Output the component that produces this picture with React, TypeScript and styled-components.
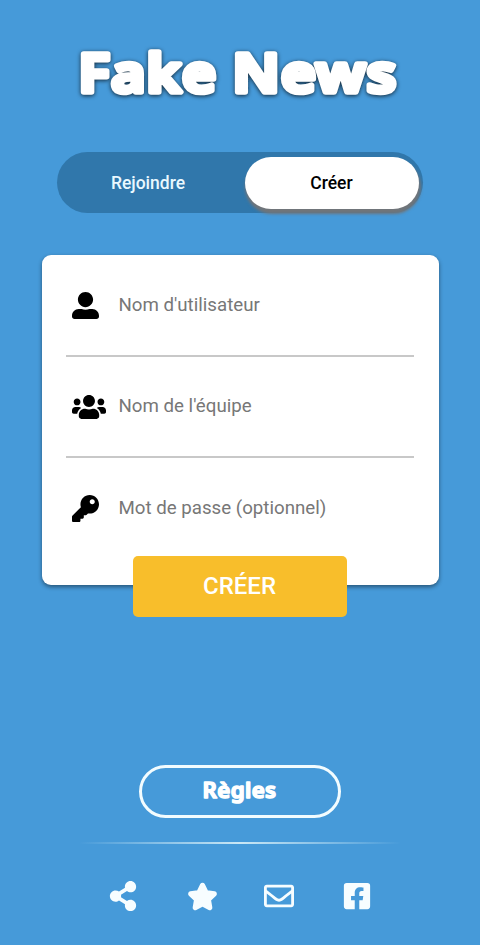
import React from "react";
import styled, { createGlobalStyle } from "styled-components";
import {
  FaUserAlt,
  FaUsers,
  FaKey,
  FaShareAlt,
  FaStar,
  FaRegEnvelope,
  FaFacebookSquare,
} from "react-icons/fa";

const GlobalStyle = createGlobalStyle`
  * { box-sizing: border-box; }
  body {
    margin: 0;
    background: #469ad9;
    font-family: Roboto, "Liberation Sans", sans-serif;
  }
  button, input { font-family: inherit; }
`;

const Page = styled.main`
  display: flex;
  flex-direction: column;
  align-items: center;
  width: 480px;
  height: 945px;
  overflow: hidden;
`;

const Logo = styled.svg`
  display: block;
  flex: none;
  width: 360px;
  height: 90px;
  margin-top: 30px;
  filter: drop-shadow(0 1px 2px rgba(0, 0, 0, 0.75));
`;

const Lettering = styled.text<{ $size: number; $stroke: number; $gap?: number }>`
  font-family: "Noto Sans", "Open Sans", sans-serif;
  font-weight: 600;
  font-size: ${(p) => p.$size}px;
  letter-spacing: ${(p) => p.$gap ?? 0}px;
  fill: #fff;
  stroke: #fff;
  stroke-width: ${(p) => p.$stroke}px;
  stroke-linejoin: round;
`;

const Toggle = styled.div`
  display: flex;
  flex: none;
  width: 366px;
  height: 61px;
  margin-top: 32px;
  padding: 5px 4px 5px 9px;
  border-radius: 31px;
  background: #3077ab;
`;

const ToggleOption = styled.button<{ $active?: boolean }>`
  width: ${(p) => (p.$active ? 174 : 179)}px;
  height: 52px;
  padding: 0 ${(p) => (p.$active ? 1 : 15)}px 1px 0;
  margin: 0;
  border: 0;
  border-radius: 26px;
  font-size: 17.5px;
  font-weight: 500;
  color: ${(p) => (p.$active ? "#000" : "#e9f8ff")};
  background: ${(p) => (p.$active ? "#fff" : "transparent")};
  box-shadow: ${(p) => (p.$active ? "1px 4px 3px 1px #70757a" : "none")};
`;

const Card = styled.form`
  display: flex;
  flex-direction: column;
  align-items: center;
  flex: none;
  width: 397px;
  height: 330px;
  margin-top: 42px;
  padding: 0 24px;
  border-radius: 9px;
  background: #fff;
  box-shadow: 0 2px 4px rgba(0, 0, 0, 0.45);
`;

const Field = styled.label<{ $last?: boolean }>`
  display: flex;
  align-items: center;
  flex: none;
  width: 348px;
  height: ${(p) => (p.$last ? 97.5 : 101.5)}px;
  padding: ${(p) => (p.$last ? 2 : 0)}px 0 0 6px;
  border-bottom: ${(p) => (p.$last ? 0 : 2)}px solid #c8c8c8;
  svg { flex: none; color: #000; margin-top: 2px; }
`;

const IconSlot = styled.span`
  display: flex;
  flex: none;
  width: 46.5px;
`;

const Input = styled.input`
  width: 270px;
  padding: 0;
  border: 0;
  outline: 0;
  background: transparent;
  font-size: 18.7px;
  &::placeholder { color: #777; opacity: 1; }
`;

const Submit = styled.button`
  flex: none;
  width: 214px;
  height: 61px;
  padding: 0 1px 0 0;
  border: 0;
  border-radius: 5px;
  background: #f8be2b;
  color: #fff;
  font-size: 24px;
  font-weight: 500;
`;

const Rules = styled.button`
  display: flex;
  justify-content: center;
  flex: none;
  width: 202px;
  height: 53px;
  margin-top: 180px;
  padding: 0;
  border: 3px solid #f2fcff;
  border-radius: 27px;
  background: transparent;
`;

const RulesLabel = styled.svg`
  width: 100px;
  height: 47px;
`;

const Divider = styled.div`
  flex: none;
  width: 322px;
  height: 2px;
  margin-top: 24px;
  background: linear-gradient(90deg, rgba(225, 245, 250, 0), rgba(225, 245, 250, 0.85), rgba(225, 245, 250, 0));
`;

const Footer = styled.nav`
  display: flex;
  justify-content: space-between;
  align-items: center;
  flex: none;
  width: 264px;
  height: 34px;
  margin-top: 35px;
  color: #f7fdff;
`;

const Star = styled(FaStar)`
  overflow: visible;
  margin-left: 2px;
  path {
    stroke: currentColor;
    stroke-width: 36px;
    stroke-linejoin: round;
  }
`;

export default function App() {
  return (
    <>
      <GlobalStyle />
      <Page>
        <Logo viewBox="0 0 360 90" role="img" aria-label="Fake News">
          <Lettering x="18.5" y="61.5" $size={53} $stroke={5.6} $gap={1.2} textLength="139" lengthAdjust="spacingAndGlyphs">Fake</Lettering>
          <Lettering x="172.5" y="61.5" $size={53} $stroke={5.6} $gap={1.2} textLength="165" lengthAdjust="spacingAndGlyphs">News</Lettering>
        </Logo>
        <Toggle>
          <ToggleOption>Rejoindre</ToggleOption>
          <ToggleOption $active>Créer</ToggleOption>
        </Toggle>
        <Card onSubmit={(e) => e.preventDefault()}>
          <Field>
            <IconSlot><FaUserAlt size={27} /></IconSlot>
            <Input placeholder="Nom d'utilisateur" />
          </Field>
          <Field>
            <IconSlot><FaUsers size={34} /></IconSlot>
            <Input placeholder="Nom de l'équipe" />
          </Field>
          <Field $last>
            <IconSlot><FaKey size={27} /></IconSlot>
            <Input placeholder="Mot de passe (optionnel)" />
          </Field>
          <Submit>CRÉER</Submit>
        </Card>
        <Rules>
          <RulesLabel viewBox="0 0 100 47">
            <Lettering x="12.5" y="30" $size={22} $stroke={1.6} $gap={0.4} textLength="74" lengthAdjust="spacingAndGlyphs">Règles</Lettering>
          </RulesLabel>
        </Rules>
        <Divider />
        <Footer>
          <FaShareAlt size={30} />
          <Star size={29} />
          <FaRegEnvelope size={30} />
          <FaFacebookSquare size={30} />
        </Footer>
      </Page>
    </>
  );
}
